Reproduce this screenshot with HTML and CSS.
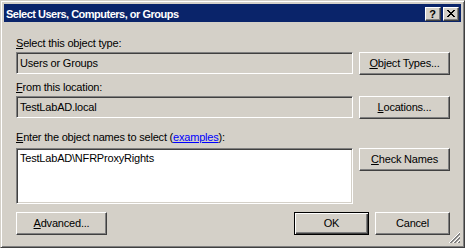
FILE: index.html
```html
<!DOCTYPE html>
<html lang="en">

<head>
    <meta charset="UTF-8" />
    <title>Select Users, Computers, or Groups</title>
    <link rel="stylesheet" href="styles.css">
</head>

<body>
    <div class="window">
        <div class="titlebar">
            <span class="title">Select Users, Computers, or Groups</span>
            <div class="caption-buttons">
                <span class="caption-btn help">?</span>
                <span class="caption-btn close">
                    <svg width="8" height="7" viewBox="0 0 8 7">
                        <path d="M0 0h2v1h-2zM6 0h2v1h-2zM1 1h2v1h-2zM5 1h2v1h-2zM2 2h4v1h-4zM3 3h2v1h-2zM2 4h4v1h-4zM1 5h2v1h-2zM5 5h2v1h-2zM0 6h2v1h-2zM6 6h2v1h-2z" fill="#000" />
                    </svg>
                </span>
            </div>
        </div>

        <div class="dialog-body">
            <div class="label label-type"><u>S</u>elect this object type:</div>
            <div class="row">
                <div class="field readonly">Users or Groups</div>
                <button class="btn side-btn" type="button"><u>O</u>bject Types...</button>
            </div>

            <div class="label label-location"><u>F</u>rom this location:</div>
            <div class="row">
                <div class="field readonly">TestLabAD.local</div>
                <button class="btn side-btn" type="button"><u>L</u>ocations...</button>
            </div>

            <div class="label label-names"><u>E</u>nter the object names to select (<a href="#">examples</a>):</div>
            <div class="row">
                <div class="field memo">TestLabAD\NFRProxyRights</div>
                <button class="btn side-btn" type="button"><u>C</u>heck Names</button>
            </div>

            <div class="footer">
                <button class="btn advanced-btn" type="button"><u>A</u>dvanced...</button>
                <div class="footer-actions">
                    <button class="btn action-btn default" type="button">OK</button>
                    <button class="btn action-btn" type="button">Cancel</button>
                </div>
            </div>
        </div>

        <svg class="size-grip" width="12" height="12" viewBox="0 0 12 12">
            <g stroke-width="1" shape-rendering="crispEdges">
                <path d="M11 0L0 11" stroke="#fff" />
                <path d="M11 1L1 11M11 2L2 11" stroke="#808080" />
                <path d="M11 4L4 11" stroke="#fff" />
                <path d="M11 5L5 11M11 6L6 11" stroke="#808080" />
                <path d="M11 8L8 11" stroke="#fff" />
                <path d="M11 9L9 11M11 10L10 11" stroke="#808080" />
            </g>
        </svg>
    </div>
</body>

</html>
```

FILE: styles.css
```css
/* Classic dialog */
* {
    box-sizing: border-box;
}

body {
    margin: 0;
    font-family: Tahoma, "Liberation Sans", Arial, sans-serif;
    font-size: 11px;
    letter-spacing: -0.2px;
    color: #000;
    background: #d4d0c8;
}

.window {
    position: relative;
    width: 465px;
    height: 248px;
    padding: 3px;
    background: #d4d0c8;
    border: 1px solid;
    border-color: #d4d0c8 #404040 #404040 #d4d0c8;
    box-shadow: inset 1px 1px #fff, inset -1px -1px #808080;
}

.titlebar {
    display: flex;
    align-items: center;
    justify-content: space-between;
    height: 18px;
    padding: 0 2px 0 2px;
    background: #0a246a;
}

.title {
    color: #fff;
    font-weight: bold;
    font-size: 11px;
    letter-spacing: -0.5px;
    line-height: 16px;
    padding-top: 2px;
}

.caption-buttons {
    display: flex;
    gap: 2px;
    margin-top: 1px;
}

.caption-btn {
    display: flex;
    align-items: center;
    justify-content: center;
    width: 16px;
    height: 14px;
    background: #d4d0c8;
    border: 1px solid;
    border-color: #fff #404040 #404040 #fff;
    box-shadow: inset -1px -1px #808080;
}

.caption-btn.help {
    font-weight: bold;
    font-size: 11px;
    line-height: 12px;
    padding-right: 1px;
}

.dialog-body {
    padding: 0 11px 0 12px;
}

.label {
    line-height: 13px;
    height: 13px;
    white-space: nowrap;
}

.label-type {
    margin: 15px 0 2px;
}

.label-location {
    margin: 6px 0 2px;
}

.label-names {
    margin: 12px 0 4px;
}

.label a {
    color: #0000ff;
}

.row {
    display: flex;
    align-items: flex-start;
    gap: 6px;
}

.field {
    flex: 1;
    border: 1px solid;
    border-color: #808080 #fff #fff #808080;
    box-shadow: inset 1px 1px #404040, inset -1px -1px #d4d0c8;
    padding: 0 3px;
    white-space: nowrap;
}

.field.readonly {
    height: 22px;
    line-height: 16px;
    padding-top: 2px;
    background: #d4d0c8;
}

.field.memo {
    height: 56px;
    line-height: 13px;
    padding-top: 3px;
    background: #fff;
}

.btn {
    height: 23px;
    padding: 0;
    font-family: inherit;
    font-size: 11px;
    letter-spacing: inherit;
    color: #000;
    background: #d4d0c8;
    border: 1px solid;
    border-color: #fff #404040 #404040 #fff;
    box-shadow: inset -1px -1px #808080;
    border-radius: 0;
    line-height: 19px;
}

.side-btn {
    width: 91px;
}

.footer {
    display: flex;
    justify-content: space-between;
    margin-top: 8px;
}

.advanced-btn {
    width: 91px;
}

.footer-actions {
    display: flex;
    gap: 6px;
}

.action-btn {
    width: 75px;
}

.btn.default {
    border-color: #000;
    box-shadow: inset 1px 1px #fff, inset -1px -1px #404040, inset -2px -2px #808080;
}

.size-grip {
    position: absolute;
    right: 3px;
    bottom: 3px;
}
```
